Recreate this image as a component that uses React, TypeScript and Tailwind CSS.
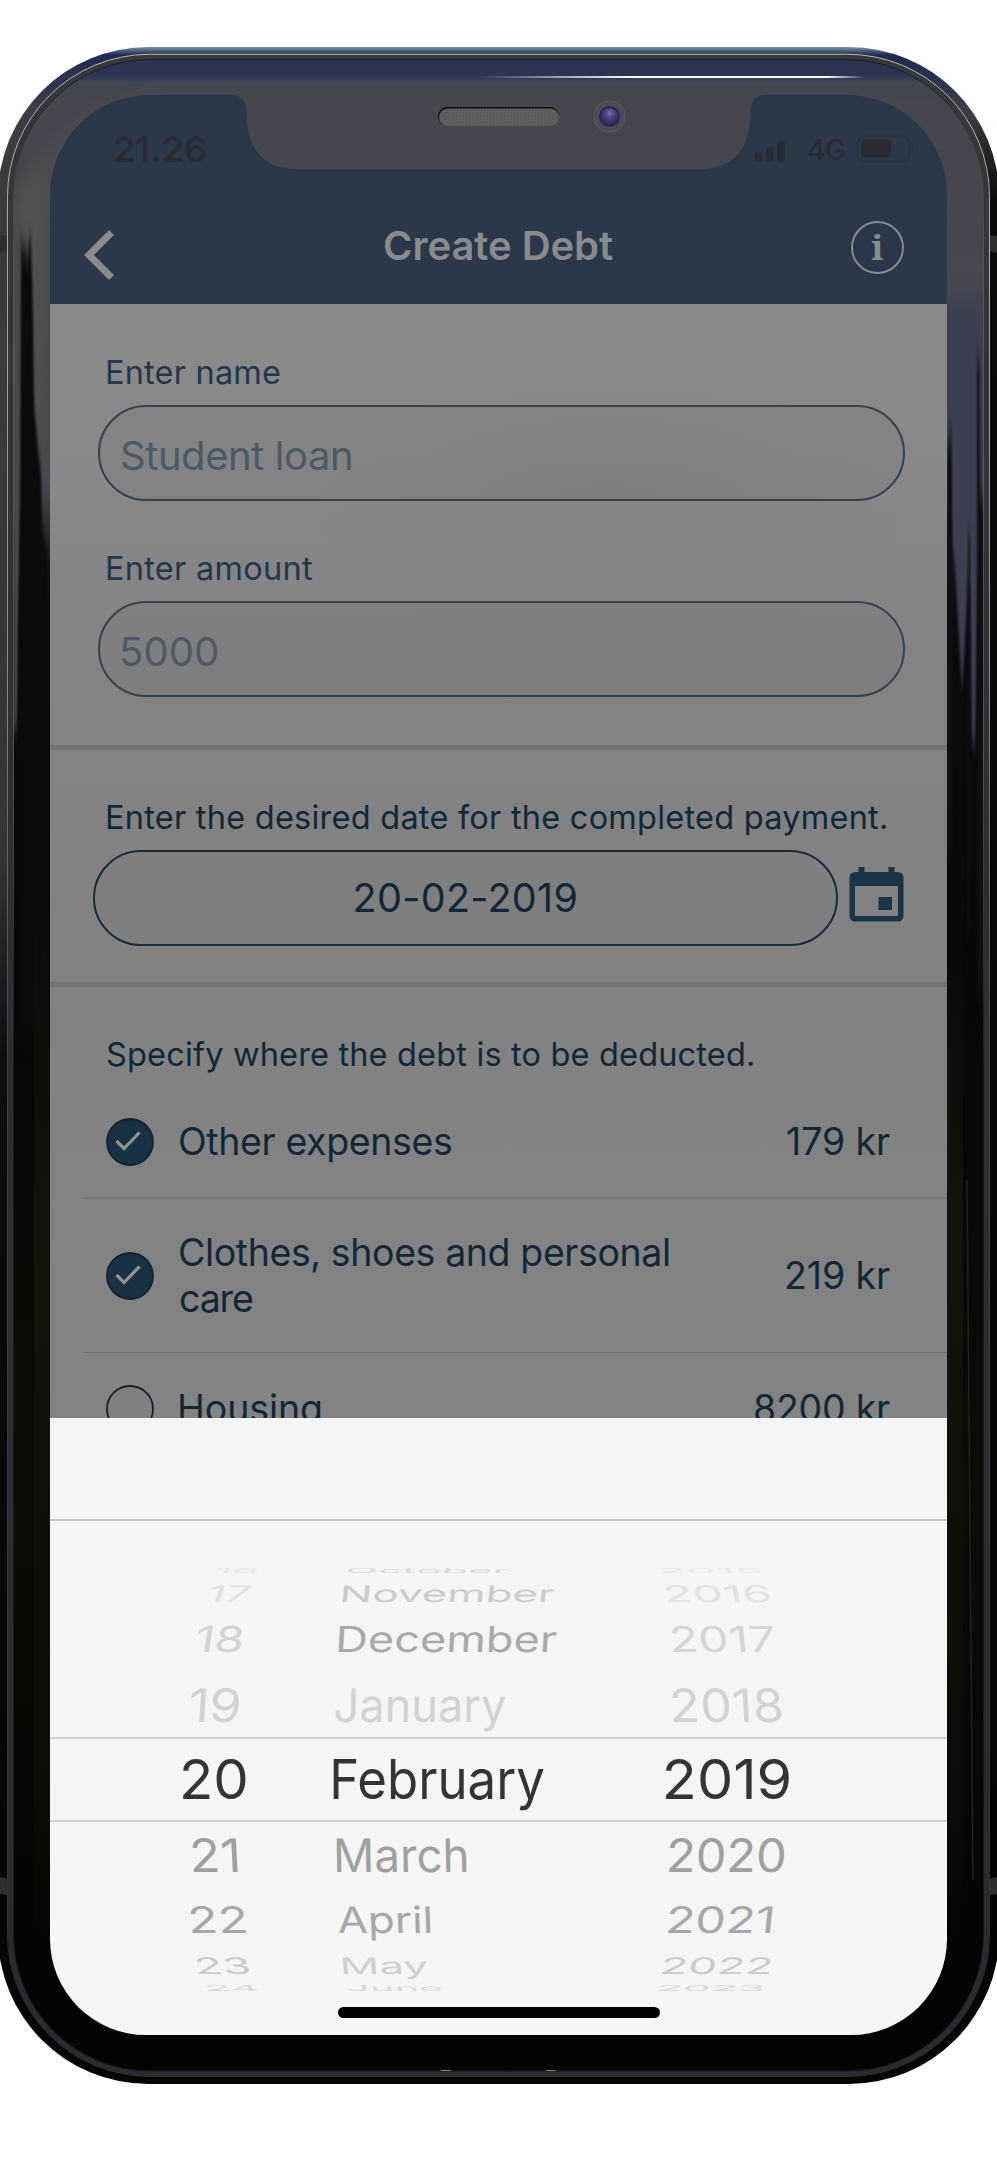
import { useLayoutEffect, useState } from "react";

const FAMILY = 'Inter, "Liberation Sans", sans-serif';

type Ink = { left: number; width: number };

/** Measures the ink box of a text run, so it can be tracked to a given width. */
function useInk(text: string, size: number, weight: number): Ink {
  const [ink, setInk] = useState<Ink>({ left: 0, width: 0 });
  useLayoutEffect(() => {
    const ctx = document.createElement("canvas").getContext("2d");
    if (!ctx) return;
    ctx.font = `${weight} ${size}px ${FAMILY}`;
    const m = ctx.measureText(text);
    setInk({ left: -m.actualBoundingBoxLeft, width: m.actualBoundingBoxRight + m.actualBoundingBoxLeft });
  }, [text, size, weight]);
  return ink;
}

type TrackedProps = { text: string; size: number; width: number; weight?: number; className?: string };

/** A single line of text whose tracking is adjusted to fill its box. */
function Tracked({ text, size, width, weight = 400, className = "" }: TrackedProps) {
  const ink = useInk(text, size, weight);
  const spacing = ink.width ? (width - ink.width) / Math.max(1, text.length - 1) : 0;
  return (
    <span
      className={`block shrink-0 whitespace-nowrap ${className}`}
      style={{ width, fontSize: size, fontWeight: weight, letterSpacing: spacing, textIndent: -ink.left }}
    >
      {text}
    </span>
  );
}

type Cell = { text: string; x: number; width: number; color: string; skew: number };
type WheelRow = { height: number; cap: number; cells: Cell[] };

const c = (text: string, x: number, width: number, color: string, skew: number): Cell => ({ text, x, width, color, skew });

const WHEEL: WheelRow[] = [
  { height: 15, cap: 5, cells: [c("16", 165, 43, "#e6e6e6", -25), c("October", 297, 162, "#d9d9d9", -14), c("2015", 610, 102, "#e8e8e8", 20)] },
  { height: 31.5, cap: 16.5, cells: [c("17", 156, 46, "#e2e2e2", -20), c("November", 292, 213, "#cbcbcb", -6), c("2016", 615, 106, "#e2e2e2", 11)] },
  { height: 60.5, cap: 26, cells: [c("18", 145, 49, "#d3d3d3", -9), c("December", 288, 219, "#a9a9a9", -3), c("2017", 621, 104, "#d5d5d5", 6)] },
  { height: 70, cap: 33.5, cells: [c("19", 139, 51, "#d2d2d1", -4), c("January", 285, 171, "#d2d2d2", -1), c("2018", 622, 110, "#d2d2d1", 3)] },
  { height: 79.5, cap: 40, cells: [c("20", 133, 63, "#343434", 0), c("February", 282.5, 211, "#343434", 0), c("2019", 616, 123, "#343434", 0)] },
  { height: 72.5, cap: 33.5, cells: [c("21", 142, 46, "#a0a0a0", 3), c("March", 286, 131, "#a0a0a0", 1), c("2020", 619, 116, "#a0a0a0", -2)] },
  { height: 56, cap: 26.5, cells: [c("22", 140, 56, "#a8a8a8", 5), c("April", 288, 93, "#a8a8a8", 2), c("2021", 618, 105, "#a8a8a8", -6)] },
  { height: 35, cap: 16.5, cells: [c("23", 146, 54, "#cbcbcb", 11), c("May", 292, 86, "#cfcfcf", 5), c("2022", 612, 110, "#cbcbcb", -11)] },
  { height: 10, cap: 6, cells: [c("24", 156, 52, "#d9d9d9", 22), c("June", 297, 95, "#d9d9d9", 12), c("2023", 608, 106, "#d8d8d8", -20)] },
];

function WheelCell({ cell, cap, gap }: { cell: Cell; cap: number; gap: number }) {
  const ink = useInk(cell.text, 55, 400);
  const lean = cap * Math.abs(Math.tan((cell.skew * Math.PI) / 180));
  const sx = ink.width ? (cell.width - lean) / ink.width : 1;
  const sy = cap / (55 * 0.727);
  return (
    <span className="block shrink-0" style={{ marginLeft: gap, width: cell.width }}>
      <span
        className="block w-max origin-left text-[55px] leading-none whitespace-nowrap"
        style={{
          color: cell.color,
          transform: `translateX(${lean / 2}px) skewX(${cell.skew}deg) scale(${sx}, ${sy}) translateX(${-ink.left}px)`,
        }}
      >
        {cell.text}
      </span>
    </span>
  );
}

function Wheel() {
  return (
    <div className="relative mt-[42px] h-[430px] w-full">
      {WHEEL.map((row, i) => (
        <div key={i} className="flex items-center" style={{ height: row.height }}>
          {row.cells.map((cell, j) => {
            const prev = row.cells[j - 1];
            return <WheelCell key={cell.text} cell={cell} cap={row.cap} gap={prev ? cell.x - prev.x - prev.width : cell.x} />;
          })}
        </div>
      ))}
      <div className="absolute top-[174px] h-[85px] w-full border-y-2 border-[#d0d0d0]" />
    </div>
  );
}

function Frame() {
  return (
    <svg className="absolute inset-0" width="997" height="2160" viewBox="0 0 997 2160" fill="none">
      <defs>
        <linearGradient id="shell" x1="0" y1="47" x2="0" y2="2084" gradientUnits="userSpaceOnUse">
          <stop offset="0" stopColor="#7f93a8" />
          <stop offset="0.002" stopColor="#4a5b78" />
          <stop offset="0.004" stopColor="#202a50" />
          <stop offset="0.03" stopColor="#3a3f48" />
          <stop offset="0.06" stopColor="#3c3c3c" />
          <stop offset="0.4" stopColor="#343434" />
          <stop offset="0.5" stopColor="#0b0b12" />
          <stop offset="1" stopColor="#050602" />
        </linearGradient>
        <linearGradient id="shellRight" x1="0" y1="110" x2="0" y2="1960" gradientUnits="userSpaceOnUse">
          <stop offset="0" stopColor="#0a0a0c" stopOpacity="0" />
          <stop offset="0.05" stopColor="#0a0a0c" />
          <stop offset="1" stopColor="#050503" />
        </linearGradient>
        <linearGradient id="bezel" x1="0" y1="60" x2="0" y2="2074" gradientUnits="userSpaceOnUse">
          <stop offset="0" stopColor="#2c3456" />
          <stop offset="0.0075" stopColor="#2d3452" />
          <stop offset="0.011" stopColor="#404652" />
          <stop offset="0.02" stopColor="#45464e" />
          <stop offset="0.06" stopColor="#46464f" />
          <stop offset="0.21" stopColor="#484852" />
          <stop offset="0.25" stopColor="#16161a" />
          <stop offset="0.28" stopColor="#0b0b0d" />
          <stop offset="0.45" stopColor="#070707" />
          <stop offset="0.7" stopColor="#0a0c06" />
          <stop offset="1" stopColor="#030303" />
        </linearGradient>
        <linearGradient id="leftGlow" x1="14" y1="0" x2="50" y2="0" gradientUnits="userSpaceOnUse">
          <stop offset="0" stopColor="#535352" />
          <stop offset="0.7" stopColor="#51514f" />
          <stop offset="1" stopColor="#4a4a51" />
        </linearGradient>
        <linearGradient id="moss" x1="0" y1="900" x2="0" y2="1960" gradientUnits="userSpaceOnUse">
          <stop offset="0" stopColor="#11150a" stopOpacity="0" />
          <stop offset="0.3" stopColor="#11150a" />
          <stop offset="0.7" stopColor="#0d1007" />
          <stop offset="1" stopColor="#0d1007" stopOpacity="0" />
        </linearGradient>
        <linearGradient id="rim" x1="0" y1="54" x2="0" y2="2077" gradientUnits="userSpaceOnUse">
          <stop offset="0" stopColor="#37383b" />
          <stop offset="0.4" stopColor="#2d2f33" />
          <stop offset="1" stopColor="#2a2b2e" />
        </linearGradient>
        <linearGradient id="edge" x1="0" y1="54" x2="0" y2="2077" gradientUnits="userSpaceOnUse">
          <stop offset="0" stopColor="#b4b8b4" />
          <stop offset="0.3" stopColor="#8c8c8a" />
          <stop offset="0.48" stopColor="#44454a" />
          <stop offset="1" stopColor="#2c2d31" />
        </linearGradient>
        <linearGradient id="innerEdge" x1="0" y1="59" x2="0" y2="2072" gradientUnits="userSpaceOnUse">
          <stop offset="0" stopColor="#17181c" />
          <stop offset="0.1" stopColor="#5a5a5a" />
          <stop offset="0.35" stopColor="#5a5a5a" />
          <stop offset="0.5" stopColor="#17181c" />
        </linearGradient>
        <linearGradient id="shine" x1="480" y1="0" x2="865" y2="0" gradientUnits="userSpaceOnUse">
          <stop offset="0" stopColor="#fff" stopOpacity="0" />
          <stop offset="0.4" stopColor="#fff" />
          <stop offset="0.9" stopColor="#fff" />
          <stop offset="1" stopColor="#fff" stopOpacity="0" />
        </linearGradient>
        <filter id="soft" x="-50%" y="-10%" width="200%" height="120%" colorInterpolationFilters="sRGB">
          <feGaussianBlur stdDeviation="0.8 10" />
        </filter>
        <filter id="softer" x="-20%" y="-20%" width="140%" height="140%" colorInterpolationFilters="sRGB">
          <feGaussianBlur stdDeviation="7" />
        </filter>
        <clipPath id="inside">
          <rect x="13" y="59" width="971" height="2013" rx="135" />
        </clipPath>
        <clipPath id="outside">
          <rect x="-2" y="47" width="1001" height="2037" rx="150" />
        </clipPath>
      </defs>
      <rect x="-2" y="47" width="1001" height="2037" rx="150" fill="url(#shell)" />
      <path d="M950 110H997V1990H950z" fill="url(#shellRight)" clipPath="url(#outside)" />
      <path d="M0 236l8-1v16l-8 2zM989 235l8 1v17l-8-2zM0 1877l8 2v16l-8-1zM989 1879l8-2v17l-8 1z" fill="#2d2e30" />
      <rect x="13" y="59" width="971" height="2013" rx="135" fill="url(#bezel)" />
      <g clipPath="url(#inside)">
        <path d="M10 230Q35 105 160 93L150 130 60 220V330L40 450 30 500 10 520Z" fill="url(#leftGlow)" filter="url(#softer)" />
        <path d="M14 220h6v330l-3 180h-3z" fill="#4c4a49" filter="url(#soft)" />
        <path
          d="M21 230l2 25 2-15 2 25 2-25 2 0 2 75 1 90 2 20 2 25 3 20 1 60 3 10 1 10 2 10v480H20L18 640 20 500z"
          fill="#0a0a0b"
          filter="url(#soft)"
        />
        <path d="M946 300h38v200l-3 20-1-20-1 20-4 230-3-10-2-150-2-10-3 60-3 50-3-50-3-60-4-50-2-90-4-30z" fill="#3b4152" filter="url(#soft)" />
        <path d="M977 365l1.500-15 1 20 1 130 4 0v500h-7.500zM968 540l2-10v400l-3 0zM947 460l3-40 2 40v400h-5z" fill="#0e0f11" filter="url(#soft)" />
        <path d="M34 900h16v1060H34zM947 900h16v1060h-16z" fill="url(#moss)" />
        <path d="M967 1180l6 700" stroke="#2a1d20" strokeWidth="1.500" />
      </g>
      <rect x="10.750" y="57" width="975.500" height="2017" rx="139" stroke="url(#rim)" strokeWidth="5.500" />
      <rect x="7.500" y="54.300" width="982" height="2022" rx="142" stroke="url(#edge)" strokeWidth="1" />
      <rect x="13.500" y="59.700" width="970" height="2011" rx="136" stroke="url(#innerEdge)" strokeWidth="0.900" />
      <path d="M480 77H865" stroke="url(#shine)" strokeWidth="2" />
      <path d="M441 2070.500h10M546 2070.500h10" stroke="#8a8a8c" strokeWidth="1.200" />
    </svg>
  );
}

function Notch() {
  return (
    <svg className="absolute top-[94px] left-[230px]" width="537" height="76" viewBox="230 94 537 76" fill="none">
      <defs>
        <radialGradient id="lens" cx="0.5" cy="0.3" r="0.65">
          <stop offset="0" stopColor="#7d74ac" />
          <stop offset="0.35" stopColor="#52418a" />
          <stop offset="1" stopColor="#2c2355" />
        </radialGradient>
        <pattern id="mesh" width="3" height="3" patternUnits="userSpaceOnUse">
          <rect width="3" height="3" fill="#59595a" />
          <path d="M0 .5h1M2 2h1" stroke="#6a6a6b" />
        </pattern>
      </defs>
      <path d="M230 94V95C243 95 246 101 246.500 113C247 150 264 169 296 169H701C733 169 750 150 750.500 113C751 101 754 95 767 95V94Z" fill="#45464e" />
      <rect x="438" y="107" width="121" height="19" rx="9.500" fill="#0c0c0e" />
      <rect x="439" y="108.500" width="120" height="17.500" rx="8.750" fill="url(#mesh)" />
      <circle cx="609.500" cy="116.500" r="15.700" fill="#4c4b5c" stroke="#5c5b68" />
      <circle cx="609.500" cy="116.500" r="10.500" fill="#2b2a3a" />
      <circle cx="609.500" cy="117" r="9" fill="url(#lens)" />
    </svg>
  );
}

function StatusBar() {
  return (
    <div className="flex h-[108px] items-center pl-[65px] text-[#292b32]">
      <Tracked text="21.26" size={36} width={91} weight={600} className="leading-none" />
      <svg className="ml-[549px] shrink-0" width="42" height="26" viewBox="0 0 42 26" fill="currentColor">
        <rect y="16.500" width="7" height="9" rx="1.500" />
        <rect x="11.300" y="11.500" width="7" height="14" rx="1.500" />
        <rect x="22.500" y="5.500" width="7" height="20" rx="1.500" />
        <rect x="33.700" y="0.500" width="7" height="25" rx="1.500" fill="#2d3b47" />
      </svg>
      <Tracked text="4G" size={28} width={37} weight={500} className="mt-[2px] ml-[11px] leading-none" />
      <svg className="ml-[12px] shrink-0" width="59" height="28" viewBox="0 0 59 28" fill="none">
        <rect x="1" y="1" width="51.500" height="25.500" rx="7" stroke="#2b313b" strokeWidth="2" />
        <rect x="4.300" y="5" width="30" height="17.500" rx="3" fill="#2a2b32" />
        <path d="M54.500 9.500q4 4 0 9z" fill="#2b313b" />
      </svg>
    </div>
  );
}

function Header() {
  return (
    <header className="h-[209px] shrink-0 bg-[#2a384a]">
      <StatusBar />
      <div className="flex h-[86px] items-center pl-[34px] text-[#8a8b8d]">
        <svg className="mt-[17px] shrink-0" width="30" height="50" viewBox="0 0 30 50" fill="none">
          <path d="M27.500 2.500 5 25l22.500 22.500" stroke="currentColor" strokeWidth="7" />
        </svg>
        <Tracked text="Create Debt" size={40} width={228} weight={600} className="ml-[271px] leading-none" />
        <div className="mt-[2px] ml-[238px] flex size-[53px] shrink-0 items-center justify-center rounded-full border-2 border-current">
          <span className="pb-[2px] font-['Noto_Serif','Liberation_Serif',serif] text-[35px] leading-none font-bold">i</span>
        </div>
      </div>
    </header>
  );
}

function Field({ label, labelWidth, value, width }: { label: string; labelWidth: number; value: string; width: number }) {
  return (
    <div className="h-[196px]">
      <Tracked text={label} size={32.5} width={labelWidth} className="ml-[57px] leading-[44px]" />
      <div className="mt-[10px] ml-[48px] flex h-[96px] w-[807px] items-center rounded-full border-2 border-[#33424f] bg-black/[0.035] pt-[5px] pl-[22px] text-[#4b5a66]">
        <Tracked text={value} size={40} width={width} className="leading-none" />
      </div>
    </div>
  );
}

function CheckMark({ checked }: { checked: boolean }) {
  return (
    <svg className="ml-[56px] shrink-0" width="48" height="48" viewBox="0 0 48 48" fill="none">
      <circle cx="24" cy="24" r="23" fill={checked ? "#1a3144" : "#808080"} stroke="#102433" strokeWidth="1.800" />
      {checked && <path d="M10.500 23 18 30.500 33.500 14.500" stroke="#929494" strokeWidth="3.200" />}
    </svg>
  );
}

type Line = { text: string; width: number };

function Expense({ checked, lines, price, className }: { checked: boolean; lines: Line[]; price: Line; className: string }) {
  return (
    <div className={`flex items-center ${className}`}>
      <CheckMark checked={checked} />
      <div className="ml-[26px] w-[560px] pt-px">
        {lines.map((line) => (
          <Tracked key={line.text} text={line.text} size={37.5} width={line.width} className="leading-[46px]" />
        ))}
      </div>
      <div className="flex w-[150px] justify-end pt-px">
        <Tracked text={price.text} size={37.5} width={price.width} className="leading-[46px]" />
      </div>
    </div>
  );
}

function Rule() {
  return <div className="h-[5px] shrink-0 bg-[#727574]" />;
}

function Form() {
  return (
    <main className="h-[1114px] shrink-0 overflow-hidden bg-[radial-gradient(ellipse_330px_150px_at_560px_205px,rgba(0,0,0,0.03),transparent),linear-gradient(to_bottom,#8a8a8b_0px,#89898a_130px,#868688_260px,#838383_360px,#828282_600px,#838383_1100px)] text-[#122737]">
      <section className="h-[441px] pt-[47px] text-[#24374a]">
        <Field label="Enter name" labelWidth={173} value="Student loan" width={229} />
        <Field label="Enter amount" labelWidth={205} value="5000" width={95} />
      </section>
      <Rule />
      <section className="h-[232px] pt-[46px]">
        <Tracked text="Enter the desired date for the completed payment." size={32.5} width={779} className="ml-[57px] leading-[44px]" />
        <div className="mt-[10px] ml-[43px] flex items-center">
          <div className="flex h-[96px] w-[745px] items-center justify-center rounded-full border-2 border-[#162b3b] bg-black/[0.02] pt-[2px]">
            <Tracked text="20-02-2019" size={39.5} width={222} className="leading-none" />
          </div>
          <svg className="mt-[-8px] ml-[11px]" width="55" height="55" viewBox="0 0 55 55" fill="#1b3448">
            <path
              fillRule="evenodd"
              d="M9.500 0h6v5h24V0h6v5H49a5.500 5.500 0 0 1 5.500 5.500V49a5.500 5.500 0 0 1-5.500 5.500H6A5.500 5.500 0 0 1 .5 49V10.500A5.500 5.500 0 0 1 6 5h3.500ZM6 19v30h43V19Z"
            />
            <path d="M29.500 30H43v13H29.500z" />
          </svg>
        </div>
      </section>
      <Rule />
      <section className="pt-[46px]">
        <Tracked text="Specify where the debt is to be deducted." size={32.5} width={646} className="ml-[57px] leading-[44px]" />
        <div className="pt-[9px]">
          <Expense checked className="h-[111px]" lines={[{ text: "Other expenses", width: 271 }]} price={{ text: "179 kr", width: 103 }} />
          <div className="ml-[34px] h-[2px] bg-[#787876]" />
          <Expense
            checked
            className="h-[153px]"
            lines={[
              { text: "Clothes, shoes and personal", width: 489 },
              { text: "care", width: 73 },
            ]}
            price={{ text: "219 kr", width: 104 }}
          />
          <div className="ml-[34px] h-px bg-[#6f6f6f]" />
          <Expense checked={false} className="h-[111px]" lines={[{ text: "Housing", width: 141 }]} price={{ text: "8200 kr", width: 135 }} />
        </div>
      </section>
    </main>
  );
}

function DateSheet() {
  return (
    <div className="h-[618px] shrink-0 bg-[#f5f5f5]">
      <div className="h-[103px] border-b-2 border-[#c5c5c5]" />
      <Wheel />
      <div className="mt-[14px] ml-[288px] h-[11px] w-[322px] rounded-full bg-black" />
    </div>
  );
}

export default function App() {
  return (
    <div className="relative h-[2160px] w-[997px] overflow-hidden bg-white pt-[95px] pl-[50px] font-[Inter,'Liberation_Sans',sans-serif]">
      <Frame />
      <div className="relative flex h-[1940px] w-[897px] flex-col overflow-hidden rounded-t-[100px] rounded-b-[96px]">
        <Header />
        <Form />
        <DateSheet />
      </div>
      <Notch />
    </div>
  );
}
